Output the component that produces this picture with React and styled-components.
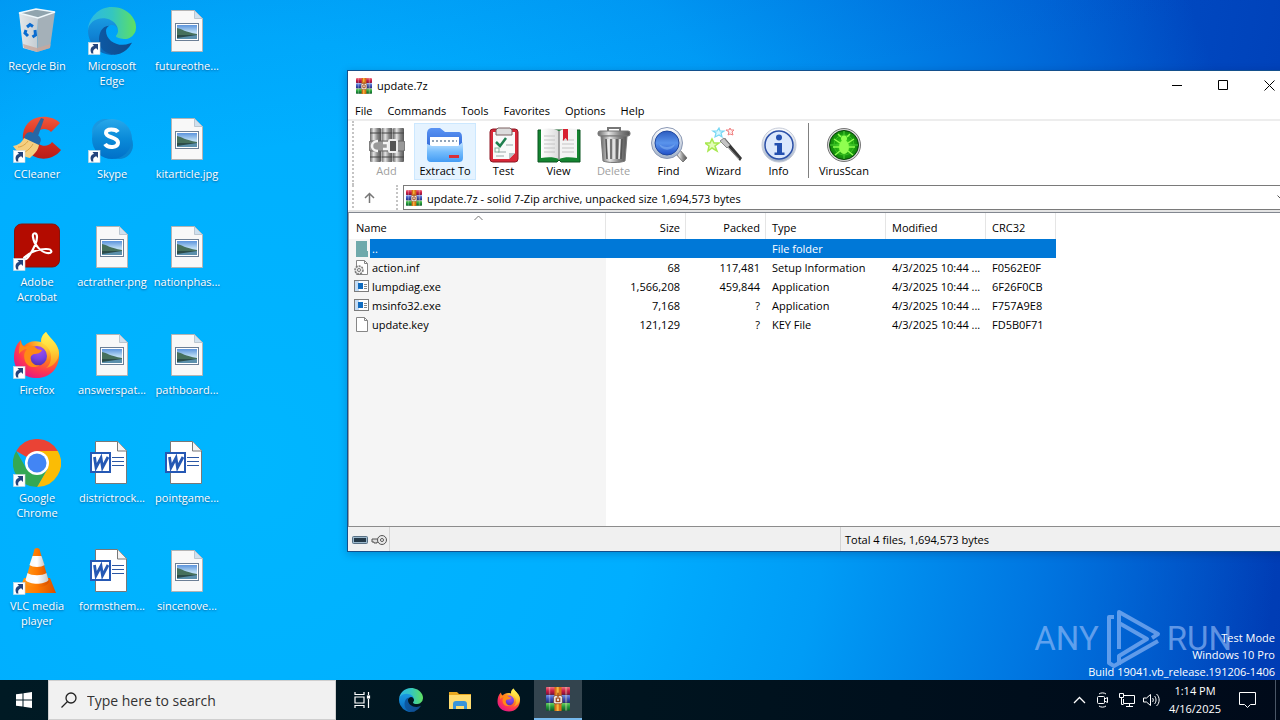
import React from "react";
import styled, { createGlobalStyle, css } from "styled-components";

const GlobalStyle = createGlobalStyle`
  *, *::before, *::after { box-sizing: border-box; }
  body {
    margin: 0;
    overflow: hidden;
    font-family: "Open Sans", "Noto Sans", sans-serif;
    font-size: 11px;
    color: #000;
  }
  button, input {
    font: inherit;
    color: inherit;
    border: 0;
    margin: 0;
    padding: 0;
    background: transparent;
  }
  svg { display: block; flex: none; }
`;

/* ---------- desktop ---------- */

const Screen = styled.div`
  display: flex;
  flex-direction: column;
  min-height: 100vh;
`;

const Wallpaper = styled.main`
  position: relative;
  flex: 1;
  overflow: hidden;
  background:
    linear-gradient(172deg, rgba(0, 60, 180, 0.1) 0%, rgba(0, 60, 180, 0) 22%),
    radial-gradient(ellipse 80% 165% at 20% 68%, #00b6ff 0%, #00aeff 38%, #009cf6 56%, #0078e2 76%, rgba(0, 88, 208, 0) 100%),
    linear-gradient(100deg, #0064d8 0%, #0050c8 74%, #003cb4 100%);
`;

const IconGrid = styled.div`
  display: grid;
  grid-auto-flow: column;
  grid-template-rows: repeat(6, 108px);
  grid-auto-columns: 75px;
  justify-content: start;
  padding-top: 7px;
`;

const Shortcut = styled.button`
  display: flex;
  flex-direction: column;
  align-items: center;
  justify-content: flex-start;
  gap: 3px;
  width: 74px;
  color: #fff;
  line-height: 15px;
  text-shadow: 0 1px 2px rgba(0, 40, 90, 0.6);
`;

const ShortcutLabel = styled.span`
  width: 74px;
  text-align: center;
  white-space: ${(p) => (p.$wrap ? "normal" : "nowrap")};
`;

const Watermark = styled.div`
  position: absolute;
  right: 5px;
  bottom: 0;
  color: #fff;
  text-align: right;
  line-height: 17px;
`;

const Brand = styled.div`
  position: absolute;
  right: 48px;
  bottom: 11px;
  display: flex;
  align-items: center;
  gap: 6px;
  font-family: "Roboto", "Liberation Sans", sans-serif;
  font-size: 33px;
  line-height: 58px;
  color: rgba(160, 195, 250, 0.6);
`;

/* ---------- archive window ---------- */

const Window = styled.section`
  position: absolute;
  top: 70px;
  left: 347px;
  right: -13px;
  display: flex;
  flex-direction: column;
  background: #fff;
  border: 1px solid #14508c;
  box-shadow: 0 2px 8px rgba(0, 20, 70, 0.25);
`;

const TitleBar = styled.header`
  display: flex;
  align-items: center;
  height: 29px;
  padding-left: 8px;
`;

const Title = styled.h1`
  flex: 1;
  margin: 0 0 0 5px;
  font-size: 11px;
  font-weight: 400;
`;

const CaptionButton = styled.button`
  display: grid;
  place-items: center;
  width: 46px;
  height: 29px;
`;

const MenuBar = styled.nav`
  display: flex;
  gap: 15px;
  height: 21px;
  padding-left: 7px;
  border-bottom: 2px solid #ededed;
`;

const MenuItem = styled.button`
  line-height: 20px;
  font-size: 11px;
  padding-top: 1px;
`;

const dottedGrip = css`
  border-left: 2px dotted #c4c4c4;
`;

const Toolbar = styled.div`
  display: flex;
  height: 64px;
  margin-left: 4px;
  padding: 2px 0 5px 5px;
  ${dottedGrip}
`;

const Tool = styled.button`
  display: flex;
  flex-direction: column;
  align-items: center;
  justify-content: flex-start;
  width: ${(p) => (p.$wide ? 62 : 55)}px;
  padding-top: 3px;
  line-height: 16px;
  white-space: nowrap;
  border: 1px solid ${(p) => (p.$hot ? "#cce8ff" : "transparent")};
  background: ${(p) => (p.$hot ? "#e5f3ff" : "transparent")};
  color: ${(p) => (p.disabled ? "#a0a0a0" : "#000")};
`;

const ToolDivider = styled.div`
  width: 1px;
  height: 55px;
  margin: 0 4px 0 2px;
  background: #808080;
`;

const AddressRow = styled.div`
  display: flex;
  align-items: stretch;
  height: 27px;
  margin-left: 4px;
  padding-bottom: 2px;
  ${dottedGrip}
`;

const UpButton = styled.button`
  display: grid;
  place-items: center;
  width: 31px;
  margin-right: 11px;
`;

const AddressBox = styled.label`
  flex: 1;
  display: flex;
  align-items: center;
  gap: 5px;
  padding: 0 5px 0 2px;
  margin-left: 5px;
  border: 1px solid #7a7a7a;
`;

const AddressGroup = styled.div`
  flex: 1;
  display: flex;
  ${dottedGrip}
`;

const AddressInput = styled.input`
  flex: 1;
  min-width: 0;
  padding-top: 1px;
  outline: 0;
`;

const ListPane = styled.div`
  min-height: 314px;
  border-top: 1px solid #828790;
  border-left: 1px solid #a0a0a0;
  box-shadow: 0 -2px 0 #e4e4e4;
  background: linear-gradient(to right, #f5f5f5 257px, #fff 257px);
`;

const FileTable = styled.table`
  width: 707px;
  table-layout: fixed;
  border-collapse: separate;
  border-spacing: 0;
`;

const HeadCell = styled.th`
  position: relative;
  height: 26px;
  padding: 2px 5px 0 6px;
  font-weight: 400;
  text-align: ${(p) => p.$align || "left"};
  background: #fff;
  border-right: 1px solid #e5e5e5;
  &:first-child { padding-left: 7px; }
`;

const HeadFiller = styled.div`
  display: flex;
  background: #fff;
`;

const SortMark = styled.svg`
  position: absolute;
  top: 2px;
  left: 125px;
`;

const Row = styled.tr`
  height: 19px;
  line-height: 18px;
  color: ${(p) => (p.$selected ? "#fff" : "#000")};
  background: ${(p) => (p.$selected ? "linear-gradient(to right, transparent 21px, #0078d7 21px)" : "transparent")};
`;

const Cell = styled.td`
  padding: 0 6px;
  text-align: ${(p) => p.$align || "left"};
  white-space: nowrap;
  overflow: hidden;
`;

const NameCell = styled(Cell)`
  padding-left: 5px;
`;

const FileName = styled.span`
  display: flex;
  align-items: center;
  gap: 3px;
`;

const StatusBar = styled.footer`
  display: grid;
  grid-template-columns: 42px 451px 1fr;
  height: 25px;
  background: #f0f0f0;
  border-top: 1px solid #8c8c8c;
`;

const StatusCell = styled.div`
  display: flex;
  align-items: center;
  gap: 3px;
  padding: 1px 4px 0;
  border-right: 1px solid #d4d4d4;
`;

/* ---------- taskbar ---------- */

const Taskbar = styled.footer`
  display: flex;
  height: 40px;
  background: linear-gradient(to right, #001a24, #00141f 50%, #000a1a);
  color: #fff;
`;

const TaskButton = styled.button`
  display: grid;
  place-items: center;
  width: 48px;
  height: 40px;
  background: ${(p) => (p.$active ? "#33444e" : "transparent")};
  border-bottom: ${(p) => (p.$active ? "2px solid #76b9ed" : "0")};
`;

const SearchBox = styled.label`
  display: flex;
  align-items: center;
  gap: 10px;
  width: 288px;
  padding-left: 12px;
  background: #f1f1f1;
  border: 1px solid #cfcfcf;
`;

const SearchInput = styled.input`
  flex: 1;
  min-width: 0;
  height: 36px;
  font-size: 14px;
  outline: 0;
  &::placeholder { color: #333; opacity: 1; }
`;

const Apps = styled.div`
  flex: 1;
  display: flex;
  gap: 1px;
  padding-left: 2px;
`;

const Tray = styled.div`
  display: flex;
  align-items: center;
`;

const TrayButton = styled.button`
  display: grid;
  place-items: center;
  width: 24px;
  height: 40px;
`;

const Clock = styled.time`
  width: 64px;
  text-align: center;
  line-height: 18px;
  padding-bottom: 1px;
`;

const NoticeButton = styled(TrayButton)`
  width: 40px;
`;

const ShowDesktop = styled.button`
  width: 5px;
  height: 40px;
  margin-left: 8px;
  border-left: 1px solid #4a5666;
`;

/* ---------- drawings ---------- */

const HiddenDefs = styled.svg`
  position: absolute;
`;

function Gradient({ id, stops, v, r }) {
  const children = stops.map((c, i) => (
    <stop key={i} offset={i / (stops.length - 1)} stopColor={c} />
  ));
  if (r) return <radialGradient id={id} cx={r[0]} cy={r[1]} r={r[2]}>{children}</radialGradient>;
  return <linearGradient id={id} x1="0" y1="0" x2={v ? 0 : 1} y2={v ? 1 : 0}>{children}</linearGradient>;
}

function Defs() {
  return (
    <HiddenDefs width="0" height="0" aria-hidden="true">
      <defs>
        <Gradient id="edgeA" stops={["#0c59a4", "#114a8b"]} />
        <Gradient id="edgeB" v={1} stops={["#1b9de2", "#1083d4", "#0a64b4"]} />
        <Gradient id="edgeC" stops={["#2cb8e6", "#34c6c0", "#5fe060"]} />
        <Gradient id="ffBody" r={[0.75, 0.15, 0.95]} stops={["#fff44f", "#ffc030", "#ff7a20", "#ff3850", "#e31587"]} />
        <Gradient id="ffFlame" v={1} stops={["#fff55a", "#ffd83a", "#ff9a1c"]} />
        <Gradient id="ffGlobe" r={[0.6, 0.2, 0.9]} stops={["#a850e8", "#7542e5", "#4b2a9c"]} />
        <Gradient id="skype" v={1} stops={["#28a8ea", "#0a8ad8", "#0070c8"]} />
        <Gradient id="ccRed" v={1} stops={["#f0583c", "#d83020", "#b81c18"]} />
        <Gradient id="cone" stops={["#ff9a1a", "#ff7a00", "#d85000"]} />
        <Gradient id="coneW" stops={["#f8f8f8", "#ffffff", "#c8c8c8"]} />
        <Gradient id="sky" v={1} stops={["#5c94dc", "#b8daf4", "#e4f2fa"]} />
        <Gradient id="binL" stops={["#e4e8ea", "#c4ccd2"]} />
        <Gradient id="metal" stops={["#6a6a6a", "#e4e4e4", "#8a8a8a", "#555"]} />
        <Gradient id="bookR" v={1} stops={["#f07080", "#c81c44", "#80103c"]} />
        <Gradient id="bookB" v={1} stops={["#7894e8", "#3850b8", "#242c78"]} />
        <Gradient id="bookG" v={1} stops={["#6cd060", "#209838", "#0c5c28"]} />
        <Gradient id="folder" v={1} stops={["#c4e4ff", "#74bcfc", "#449cf4"]} />
        <Gradient id="folderBack" v={1} stops={["#5a94f4", "#2a60d0"]} />
        <Gradient id="lens" v={1} stops={["#2c5cc0", "#5a94ec", "#2050c8"]} />
        <Gradient id="rim" v={1} stops={["#ffffff", "#a0b0c8"]} />
        <Gradient id="virus" r={[0.5, 0.5, 0.6]} stops={["#50f020", "#20a810", "#087008"]} />
        <Gradient id="page" stops={["#ffffff", "#dcdcdc"]} />
      </defs>
    </HiddenDefs>
  );
}

function ShortcutArrow() {
  return (
    <g>
      <rect x="0.5" y="35.5" width="11.5" height="12" fill="#fff" stroke="#c8d8e0" strokeWidth="0.6" />
      <path d="M3.500 46.500c-2-4-.5-7 2.500-7.500L4.500 37H10v6l-1.800-1.800C6 42 4.500 43.500 5.500 46.500z" fill="#24447c" />
    </g>
  );
}

function EdgeShape() {
  return (
    <g>
      <path fill="url(#edgeB)" d="M105.700 241.400a79.200 79.200 0 0 1-22.700-21.300 80.700 80.700 0 0 1 29.500-120c3.200-1.500 8.500-4.100 15.600-4a32.400 32.400 0 0 1 25.700 13 31.900 31.900 0 0 1 6.300 18.700c0-.2 24.500-79.600-80-79.600-43.900 0-80 41.700-80 78.200 0 19.300 4.500 38.300 13 56a128 128 0 0 0 156.400 67 75.500 75.500 0 0 1-63.800-8z" />
      <path fill="url(#edgeA)" d="M231 190.500c-3.400 1.800-6.900 3.400-10.500 4.700a101.500 101.500 0 0 1-35.900 6.500c-47.300 0-88.500-32.500-88.500-74.300 0-11.400 6.500-21.900 16.400-27.300-42.800 1.800-53.800 46.400-53.800 72.500 0 74 68.100 81.400 82.800 81.400 7.900 0 19.800-2.300 27-4.600l1.300-.4A127.800 127.800 0 0 0 232.800 193a1.300 1.300 0 0 0-1.800-2.500z" />
      <path fill="url(#edgeC)" d="M152.300 148.900c-.9 1-3.400 2.500-3.400 5.600 0 2.600 1.700 5.200 4.800 7.300 14.300 10 41.400 8.600 41.500 8.600 10.700 0 21.100-2.900 30.300-8.300A61.400 61.400 0 0 0 256 109.100c.3-22.400-8-37.300-11.300-43.900C223.500 23.900 177.700 0 128 0 58 0 1 56 0 126.200c.5-36.500 36.800-66 80-66 3.500 0 23.500.3 42 10 16.300 8.600 24.900 18.900 30.800 29.200 6.200 10.700 7.300 24.100 7.300 29.500 0 5.300-2.700 13.300-7.800 20z" />
    </g>
  );
}

function FirefoxShape() {
  return (
    <g>
      <path d="M46 22C45 12 38 9 33 1c-4 3-5 6-5 10-8-2-13 0-17 4-2-1-3-3-3-6C3 13 1 20 1 27c0 12 10 20 23 20s23-10 22-25z" fill="url(#ffBody)" />
      <path d="M33 1c-4 3-5 7-4 11 6 3 9 8 9 14 0 5-2 9-5 11 7-1 13-8 13-15C45 12 38 9 33 1z" fill="url(#ffFlame)" opacity="0.9" />
      <circle cx="24" cy="25" r="10" fill="url(#ffGlobe)" />
      <path d="M8 9c0 4 1 6 4 7 3-2 8-2 11 1 1 1 3 2 6 2-1 3-5 4-8 4-3 1-4 3-3 6 1 4 5 6 9 5-5 4-13 2-15-4-2-7 0-9 2-12-3 0-6 2-8 5 0-6 1-11 2-14z" fill="#ff8a16" />
    </g>
  );
}

function WinRarShape() {
  return (
    <g>
      {["url(#bookR)", "url(#bookB)", "url(#bookG)"].map((fill, i) => (
        <g key={fill}>
          <rect x="0" y={i * 11} width="34" height="10.500" rx="1" fill={fill} />
          <rect x="4" y={i * 11} width="2" height="10.500" fill="#fff" opacity="0.3" />
          <rect x="27" y={i * 11} width="3" height="10.500" fill="#e8d8b0" opacity="0.4" />
        </g>
      ))}
      <rect x="12" y="0" width="10" height="33" fill="#d87018" />
      <rect x="15" y="0" width="3" height="33" fill="#f4b840" />
      <rect x="11" y="12" width="12" height="11" rx="2" fill="#fff" stroke="#6a3a20" />
      <path d="M14.500 14.500v5.500h5v-5.500M17 8v9" stroke="#a04818" strokeWidth="2" fill="none" />
    </g>
  );
}

function WinRarIcon({ size }) {
  return <svg width={size} height={size} viewBox="0 0 34 33" preserveAspectRatio="none"><WinRarShape /></svg>;
}

function ImageFile() {
  return (
    <g>
      <path d="M8.500 3.500h23l8 8v33h-31z" fill="#f8f8f8" stroke="#b4b4b4" />
      <path d="M31.500 3.500v8h8z" fill="#cfe0ee" stroke="#b0bcc6" strokeWidth="0.800" />
      <rect x="12.500" y="16.500" width="23" height="17" fill="#fff" stroke="#6c7f96" />
      <rect x="14" y="18" width="20" height="14" fill="url(#sky)" />
      <path d="M14 21c5 1 8 4 20 6v1H14z" fill="#46705c" />
      <path d="M14 28h20v4H14z" fill="#5c90ac" />
      <path d="M14 28h20l-20 3z" fill="#2c4c48" />
    </g>
  );
}

function WordFile() {
  return (
    <g>
      <path d="M7.500 2.500h22l9 9v33h-31z" fill="#fff" stroke="#787878" />
      <path d="M29.500 2.500v9.500h9" fill="#f4f4f4" stroke="#787878" />
      <path d="M24 18.500h12M24 22.500h12M24 26.500h12" stroke="#2b57a4" strokeWidth="1.200" />
      <rect x="2" y="13" width="21" height="21" fill="#2558b4" />
      <rect x="4" y="15" width="17" height="17" fill="#fff" />
      <path d="M6.500 18l1.500 10.500L13 19l1.500 9.500L20 18" fill="none" stroke="#2558b4" strokeWidth="2.800" />
    </g>
  );
}

const art = {
  bin: (
    <g>
      <path d="M6 6l19 5-1 34-14-4z" fill="url(#binL)" />
      <path d="M25 11l17-6-5 36-13 4z" fill="#a4b0b8" />
      <path d="M6 6l17-4 19 3-17 6z" fill="#90a4ae" stroke="#f0f8fc" strokeWidth="1.400" />
      <path d="M10 37l14 4 13.500-4-.5 4-13 4-13-4z" fill="#c8a89c" opacity="0.800" />
      <path d="M14 20l3-2.500 3 2M22 23l.5 5-3 2M15 29l-3-3 1-3" stroke="#0a6cd0" strokeWidth="3" fill="none" />
    </g>
  ),
  edge: <g transform="scale(0.1875)"><EdgeShape /></g>,
  image: <ImageFile />,
  word: <WordFile />,
  ccleaner: (
    <g>
      <path d="M47 8C37-2 13-1 10 19c-2 18 14 29 29 23 4-2 7-4 9-7l-9-8c-4 6-15 5-16-4-1-8 9-12 15-6z" fill="url(#ccRed)" />
      <path d="M28 3l3 1-7 20-6-3z" fill="#2c64a0" />
      <path d="M18 17c-5 0-6 3-7 7l14 7c3-4 4-7 1-10z" fill="#2468a8" />
      <path d="M11 23l15 7c-1 6-5 9-9 13-6-1-12-5-17-12 6-1 9-4 11-8z" fill="#f5cf80" />
      <path d="M5 32c4 0 8-3 10-6M12 37c4-2 7-6 8-8" stroke="#d8a448" fill="none" />
    </g>
  ),
  skype: (
    <g>
      <circle cx="17" cy="17" r="13" fill="#1a98e0" />
      <circle cx="31" cy="30" r="14" fill="#0a84d0" />
      <circle cx="24" cy="24" r="20" fill="url(#skype)" />
      <path d="M30 17c-2-3-12-4-12 1s12 4 12 9.500-10 6-13 1.500" stroke="#fff" strokeWidth="4" fill="none" />
    </g>
  ),
  acrobat: (
    <g>
      <rect x="1.500" y="1" width="45" height="43" rx="7" fill="#b30b00" stroke="#85140c" />
      <path d="M12 34c-3 2 1 4 4-1 4-6 8-13 8-19 0-5-5-5-4 0 1 8 8 15 14 16 6 1 6-4-1-4-7 0-14 2-21 8z" fill="none" stroke="#fff" strokeWidth="2.200" />
    </g>
  ),
  firefox: <FirefoxShape />,
  chrome: (
    <g>
      <path d="M24 24L3.200 12A24 24 0 0 1 44.800 12z" fill="#ea4335" />
      <path d="M44.800 12A24 24 0 0 1 24 48l10.400-18L24 12z" fill="#fbbc05" />
      <path d="M24 48A24 24 0 0 1 3.200 12l10.400 18L34.400 30z" fill="#34a853" />
      <circle cx="24" cy="24" r="12" fill="#fff" />
      <circle cx="24" cy="24" r="9.500" fill="#4285f4" />
    </g>
  ),
  vlc: (
    <g>
      <path d="M11 31h26l6 15H5z" fill="url(#cone)" />
      <path d="M24 1c2 0 3 1 3 3l9 31c-3 7-21 7-24 0l9-31c0-2 1-3 3-3z" fill="url(#cone)" />
      <path d="M19.500 9h9l3 9c-3 2.500-12 2.500-15 0z" fill="url(#coneW)" />
      <path d="M14.500 26c4 3 15 3 19 0l2 7c-4 5-19 5-23 0z" fill="url(#coneW)" />
    </g>
  ),
};

const linked = new Set(["edge", "ccleaner", "skype", "acrobat", "firefox", "chrome", "vlc"]);

const shortcuts = [
  ["Recycle Bin", "bin"],
  ["CCleaner", "ccleaner"],
  ["Adobe Acrobat", "acrobat", true],
  ["Firefox", "firefox"],
  ["Google Chrome", "chrome", true],
  ["VLC media player", "vlc", true],
  ["Microsoft Edge", "edge", true],
  ["Skype", "skype"],
  ["actrather.png", "image"],
  ["answerspat...", "image"],
  ["districtrock...", "word"],
  ["formsthem...", "word"],
  ["futureothe...", "image"],
  ["kitarticle.jpg", "image"],
  ["nationphas...", "image"],
  ["pathboard...", "image"],
  ["pointgame...", "word"],
  ["sincenove...", "image"],
];

const toolArt = {
  Add: (
    <svg width="36" height="36" viewBox="0 0 36 36">
      {[1, 12.5, 24].map((x) => (
        <g key={x}>
          <rect x={x} y="1" width="11" height="34" rx="1" fill="url(#metal)" />
          <path d={`M${x} 6h11M${x} 30h11`} stroke="#444" />
        </g>
      ))}
      <rect x="0" y="14" width="36" height="10" rx="2" fill="#999" stroke="#666" />
      <path d="M9 14c-8 0-8 10 0 10M14 16h5v6h-5" stroke="#f4f4f4" strokeWidth="2.500" fill="none" />
      <rect x="20" y="13" width="8" height="12" rx="1" fill="#555" stroke="#eee" strokeWidth="2" />
    </svg>
  ),
  "Extract To": (
    <svg width="38" height="36" viewBox="0 0 38 36">
      <path d="M1 7c0-4 2-6 5-6h8l5 4h13c3 0 4 2 4 5v15H1z" fill="url(#folderBack)" />
      <rect x="4" y="10" width="29" height="14" fill="#fff" />
      <path d="M6 14h25" stroke="#92a4b8" strokeWidth="2" strokeDasharray="2 2" />
      <path d="M1 17l5 2h26l5-4v16c0 3-2 4-4 4H5c-3 0-4-2-4-4z" fill="url(#folder)" />
      <rect x="23" y="28" width="10" height="3" fill="#d83038" />
    </svg>
  ),
  Test: (
    <svg width="30" height="36" viewBox="0 0 30 36">
      <rect x="1" y="2" width="28" height="33" rx="3" fill="#d82838" stroke="#8c1824" />
      <path d="M4 5h22v21l-6 6H4z" fill="#f8fafa" />
      <path d="M20 32v-6h6z" fill="#b8c4c8" />
      <path d="M7 3l2-2h12l2 2v5H7z" fill="#ddd" stroke="#7a6060" />
      <path d="M7 15l4 4 6-8" stroke="#208050" strokeWidth="2.500" fill="none" />
      <path d="M17 18h7M9 25h8M7 29h8" stroke="#99a6a6" />
      <rect x="6" y="21" width="4" height="4" fill="none" stroke="#86b09a" />
    </svg>
  ),
  View: (
    <svg width="44" height="36" viewBox="0 0 44 36">
      <path d="M1 3h42v32H24l-2-2-2 2H1z" fill="#148430" stroke="#0a5420" />
      <path d="M4 2c7-1 13-1 18 2v28c-5-2-11-2-18-1z" fill="url(#page)" />
      <path d="M40 2c-7-1-13-1-18 2v28c5-2 11-2 18-1z" fill="#f4f4f4" />
      <path d="M7 9h11M7 13h11M7 17h11M7 21h11M7 25h11M25 17h12M25 21h12M25 25h12M25 13h12" stroke="#c4c4c4" />
      <path d="M22 4v29" stroke="#888" strokeWidth="1.500" />
      <path d="M26 2h5v12l-2.500-3-2.500 3z" fill="#d82030" />
    </svg>
  ),
  Delete: (
    <svg width="34" height="36" viewBox="0 0 34 36">
      <path d="M11 4V1h12v3" fill="none" stroke="#777" strokeWidth="2" />
      <rect x="1" y="4" width="32" height="5" rx="2" fill="url(#metal)" stroke="#777" />
      <path d="M4 9h26l-2 25c-5 2-17 2-22 0z" fill="url(#metal)" stroke="#777" />
      <path d="M9 12l1 20M14 12v20M20 12v20M25 12l-1 20" stroke="#555" strokeWidth="1.500" />
      <path d="M11 12l1 20M17 12v20M23 12l-1 20" stroke="#eee" strokeWidth="1.500" />
    </svg>
  ),
  Find: (
    <svg width="38" height="36" viewBox="0 0 38 36">
      <path d="M25 26l4-4 8 9-4 4z" fill="url(#metal)" stroke="#777" />
      <circle cx="17" cy="16" r="15.500" fill="url(#rim)" stroke="#8a98b4" />
      <circle cx="17" cy="16" r="12" fill="url(#lens)" stroke="#2048a0" />
      <path d="M9 17c5 4 11 4 16 0-2 7-13 8-16 0z" fill="#8cbcf8" opacity="0.500" />
    </svg>
  ),
  Wizard: (
    <svg width="38" height="36" viewBox="0 0 38 36">
      <path d="M17 14l3-3 17 20-2 3z" fill="#383838" />
      <path d="M15 14l4-3 6 7-3 3z" fill="#c4c4c4" stroke="#888" />
      <path d="M23 20l11 12" stroke="#999" />
      <path d="M7 12l2 4h5l-4 3 2 5-5-3-4 3 1-5-4-3h5z" fill="#e4fcb8" stroke="#a8e850" strokeWidth="1.500" />
      <path d="M14 1l1 3h4l-3 2 1 4-3-2-4 2 1-4-3-2h4z" fill="#d8f8ff" stroke="#78d8f4" strokeWidth="1.200" />
      <path d="M25 1l1 2h3l-2 2 1 3-3-1-2 1 1-3-3-2h3z" fill="#fff0f0" stroke="#f08080" />
    </svg>
  ),
  Info: (
    <svg width="36" height="36" viewBox="0 0 36 36">
      <circle cx="18" cy="18" r="17" fill="url(#rim)" stroke="#c4cad8" />
      <circle cx="18" cy="18" r="14" fill="#dce8fc" stroke="#2c50a8" strokeWidth="1.500" />
      <circle cx="18" cy="10.500" r="3" fill="#2450b0" />
      <path d="M13.500 16H21v9.500h2.500V28h-10v-2.500H16v-7h-2.500z" fill="#2450b0" />
    </svg>
  ),
  VirusScan: (
    <svg width="36" height="36" viewBox="0 0 36 36">
      <circle cx="18" cy="18" r="16.500" fill="#d8d8d8" stroke="#777" />
      <circle cx="18" cy="18" r="14.500" fill="url(#virus)" stroke="#084408" />
      <path d="M4 18h28M18 4v28" stroke="#50d038" />
      <circle cx="18" cy="18" r="10" fill="none" stroke="#38c020" />
      <ellipse cx="18" cy="20" rx="5" ry="7" fill="#90ff50" />
      <circle cx="18" cy="11.500" r="3" fill="#90ff50" />
      <path d="M15 10l-3-3M21 10l3-3M14 16l-6-4M22 16l6-4M13 20H7M23 20h6M14 24l-5 4M22 24l5 4" stroke="#90ff50" strokeWidth="1.500" />
    </svg>
  ),
};

const tools = ["Add", "Extract To", "Test", "View", "Delete", "Find", "Wizard", "Info"];

function FileGlyph({ kind }) {
  if (kind === "folder")
    return (
      <svg width="15" height="17" viewBox="0 0 15 17">
        <path d="M2 1h11v10h1v6H2z" fill="#6fa9ab" />
      </svg>
    );
  if (kind === "exe")
    return (
      <svg width="15" height="13" viewBox="0 0 15 13">
        <rect x="0.500" y="0.500" width="14" height="11" fill="#fff" stroke="#7c7c7c" />
        <rect x="1" y="1" width="4" height="10" fill="#c4dcf4" />
        <rect x="4" y="3" width="5" height="6" fill="#106cc0" />
        <path d="M10 4.500h3M10 6.500h3M10 8.500h3" stroke="#888" />
      </svg>
    );
  return (
    <svg width="15" height="17" viewBox="0 0 15 17">
      <path d="M2.500 1.500h8l3 3v11h-11z" fill="#fff" stroke="#868686" />
      <path d="M10.500 1.500v3h3" fill="none" stroke="#868686" />
      {kind === "inf" && (
        <g>
          <circle cx="5" cy="11" r="4" fill="#e8e8e8" stroke="#777" strokeWidth="1.500" strokeDasharray="2 1" />
          <circle cx="5" cy="11" r="1.500" fill="#fff" stroke="#777" />
        </g>
      )}
    </svg>
  );
}

const files = [
  ["..", "folder", "", "", "File folder", "", ""],
  ["action.inf", "inf", "68", "117,481", "Setup Information", "4/3/2025 10:44 ...", "F0562E0F"],
  ["lumpdiag.exe", "exe", "1,566,208", "459,844", "Application", "4/3/2025 10:44 ...", "6F26F0CB"],
  ["msinfo32.exe", "exe", "7,168", "?", "Application", "4/3/2025 10:44 ...", "F757A9E8"],
  ["update.key", "blank", "121,129", "?", "KEY File", "4/3/2025 10:44 ...", "FD5B0F71"],
];

function ArchiveWindow() {
  return (
    <Window aria-label="update.7z">
      <TitleBar>
        <WinRarIcon size={16} />
        <Title>update.7z</Title>
        <CaptionButton aria-label="Minimize">
          <svg width="11" height="11"><path d="M0 5.500h10" stroke="#000" /></svg>
        </CaptionButton>
        <CaptionButton aria-label="Maximize">
          <svg width="11" height="11"><path d="M.5.5h9v9h-9z" fill="none" stroke="#000" /></svg>
        </CaptionButton>
        <CaptionButton aria-label="Close">
          <svg width="11" height="11"><path d="M.5.5l10 10M10.500.5l-10 10" stroke="#000" /></svg>
        </CaptionButton>
      </TitleBar>
      <MenuBar>
        {["File", "Commands", "Tools", "Favorites", "Options", "Help"].map((m) => (
          <MenuItem key={m}>{m}</MenuItem>
        ))}
      </MenuBar>
      <Toolbar role="toolbar">
        {tools.map((name) => (
          <Tool
            key={name}
            $wide={name === "Extract To"}
            $hot={name === "Extract To"}
            disabled={name === "Add" || name === "Delete"}
          >
            {toolArt[name]}
            <span>{name}</span>
          </Tool>
        ))}
        <ToolDivider />
        <Tool $wide>
          {toolArt.VirusScan}
          <span>VirusScan</span>
        </Tool>
      </Toolbar>
      <AddressRow>
        <UpButton aria-label="Up one level">
          <svg width="11" height="12"><path d="M5.500 11V1.500M1 6l4.500-4.500L10 6" fill="none" stroke="#777" strokeWidth="1.500" /></svg>
        </UpButton>
        <AddressGroup>
          <AddressBox>
            <WinRarIcon size={16} />
            <AddressInput
              aria-label="Address"
              readOnly
              value="update.7z - solid 7-Zip archive, unpacked size 1,694,573 bytes"
            />
            <svg width="9" height="5"><path d="M.5.5l4 4 4-4" fill="none" stroke="#555" /></svg>
          </AddressBox>
        </AddressGroup>
      </AddressRow>
      <ListPane>
        <HeadFiller>
          <FileTable>
            <colgroup>
              {[257, 80, 80, 120, 100, 70].map((w, i) => <col key={i} width={w} />)}
            </colgroup>
            <thead>
              <tr>
                <HeadCell>
                  Name
                  <SortMark width="9" height="6"><path d="M.5 5l4-4 4 4" fill="none" stroke="#777" /></SortMark>
                </HeadCell>
                <HeadCell $align="right">Size</HeadCell>
                <HeadCell $align="right">Packed</HeadCell>
                <HeadCell>Type</HeadCell>
                <HeadCell>Modified</HeadCell>
                <HeadCell>CRC32</HeadCell>
              </tr>
            </thead>
            <RowsBody />
          </FileTable>
        </HeadFiller>
      </ListPane>
      <StatusBar>
        <StatusCell>
          <svg width="16" height="8"><rect x=".5" y=".5" width="15" height="7" rx="1" fill="#9cb8cc" stroke="#587084" /><rect x="2" y="2" width="12" height="4" fill="#243848" /></svg>
          <svg width="17" height="12">
            <path d="M9 5H1v3h2v1h3V8h4" fill="#ddd" stroke="#555" />
            <circle cx="11" cy="6" r="4.500" fill="#e8e8e8" stroke="#555" />
            <circle cx="11" cy="6" r="1.500" fill="#fff" stroke="#555" />
          </svg>
        </StatusCell>
        <StatusCell />
        <StatusCell>Total 4 files, 1,694,573 bytes</StatusCell>
      </StatusBar>
    </Window>
  );
}

const Body = styled.tbody`
  background: linear-gradient(to right, #f5f5f5 257px, #fff 257px);
`;

function RowsBody() {
  return (
    <Body>
      {files.map(([name, kind, size, packed, type, modified, crc], i) => (
        <Row key={name} $selected={i === 0}>
          <NameCell>
            <FileName>
              <FileGlyph kind={kind} />
              {name}
            </FileName>
          </NameCell>
          <Cell $align="right">{size}</Cell>
          <Cell $align="right">{packed}</Cell>
          <Cell>{type}</Cell>
          <Cell>{modified}</Cell>
          <Cell>{crc}</Cell>
        </Row>
      ))}
    </Body>
  );
}

export default function App() {
  return (
    <Screen>
      <GlobalStyle />
      <Defs />
      <Wallpaper>
        <IconGrid>
          {shortcuts.map(([label, kind, wrap]) => (
            <Shortcut key={label}>
              <svg width="48" height="48" viewBox="0 0 48 48">
                {art[kind]}
                {linked.has(kind) && <ShortcutArrow />}
              </svg>
              <ShortcutLabel $wrap={wrap}>{label}</ShortcutLabel>
            </Shortcut>
          ))}
        </IconGrid>
        <Brand>
          <span>ANY</span>
          <svg width="56" height="60" viewBox="0 0 56 60" fill="none" stroke="currentColor" strokeWidth="4" strokeLinejoin="round">
            <path d="M9 8H4v46l5 3 44-25M14 40V3l39 22-6 4M14 14l28 16-28 17v9" />
          </svg>
          <span>RUN</span>
        </Brand>
        <Watermark>
          <div>Test Mode</div>
          <div>Windows 10 Pro</div>
          <div>Build 19041.vb_release.191206-1406</div>
        </Watermark>
        <ArchiveWindow />
      </Wallpaper>
      <Taskbar>
        <TaskButton aria-label="Start">
          <svg width="16" height="16"><path d="M0 2.300L6.500 1.400v6.100H0zM7.500 1.200L16 0v7.500H7.500zM0 8.500h6.500v6.100L0 13.700zM7.500 8.500H16V16l-8.500-1.200z" fill="#fff" /></svg>
        </TaskButton>
        <SearchBox>
          <svg width="16" height="16" fill="none" stroke="#222" strokeWidth="1.300"><circle cx="10" cy="6" r="5" /><path d="M6.500 9.500L.5 15.500" /></svg>
          <SearchInput aria-label="Search" placeholder="Type here to search" />
        </SearchBox>
        <Apps>
          <TaskButton aria-label="Task View">
            <svg width="17" height="16" fill="none" stroke="#fff" strokeWidth="1.200">
              <path d="M1 0v2.500h9V0M1 16v-2.500h9V16M1 5h9v6H1zM14.500 0v3M14.500 7v9" />
              <rect x="13.500" y="4" width="2" height="2" fill="#fff" />
            </svg>
          </TaskButton>
          <TaskButton aria-label="Microsoft Edge"><svg width="24" height="24" viewBox="0 0 256 256"><EdgeShape /></svg></TaskButton>
          <TaskButton aria-label="File Explorer">
            <svg width="22" height="19" viewBox="0 0 22 19">
              <path d="M0 1h8l2 2h12v15H0z" fill="#e8a820" />
              <path d="M0 4h22v14H0z" fill="#ffdc70" />
              <path d="M4 18v-5c0-2 1-3 3-3h8c2 0 3 1 3 3v5h-3v-3H7v3z" fill="#3a94d8" />
            </svg>
          </TaskButton>
          <TaskButton aria-label="Firefox"><svg width="24" height="24" viewBox="0 0 48 48"><FirefoxShape /></svg></TaskButton>
          <TaskButton aria-label="WinRAR" $active><WinRarIcon size={24} /></TaskButton>
        </Apps>
        <Tray>
          <TrayButton aria-label="Show hidden icons">
            <svg width="13" height="8"><path d="M1 7l5.500-5.500L12 7" fill="none" stroke="#fff" strokeWidth="1.300" /></svg>
          </TrayButton>
          <TrayButton aria-label="Meet Now">
            <svg width="14" height="16" fill="none" stroke="#fff"><rect x="1.500" y="4.500" width="7" height="7" rx="1" /><path d="M8.500 7l3-1.500v5l-3-1.500M3 2c2-1.500 5-1.500 7 0M3 14c2 1.500 5 1.500 7 0" /></svg>
          </TrayButton>
          <TrayButton aria-label="Network">
            <svg width="17" height="15" fill="none" stroke="#fff"><path d="M5 2.500h10.500v8H4.500V6M7 13.500h7M10.500 10.500v3M.5.5h4v4h-4zM2.500 4.500v7h2" /></svg>
          </TrayButton>
          <TrayButton aria-label="Volume">
            <svg width="17" height="14" fill="none" stroke="#fff"><path d="M.5 5h3l4-3.500v11L3.500 9h-3zM9.500 5c1 1 1 3 0 4M11.500 3c2 2 2 6 0 8M13.500 1c3.500 3 3.500 9 0 12" /></svg>
          </TrayButton>
          <Clock>
            1:14 PM<br />4/16/2025
          </Clock>
          <NoticeButton aria-label="Notifications">
            <svg width="17" height="16"><path d="M.5.5h16v12h-5l-3 3-3-3h-5z" fill="none" stroke="#fff" /></svg>
          </NoticeButton>
          <ShowDesktop aria-label="Show desktop" />
        </Tray>
      </Taskbar>
    </Screen>
  );
}
